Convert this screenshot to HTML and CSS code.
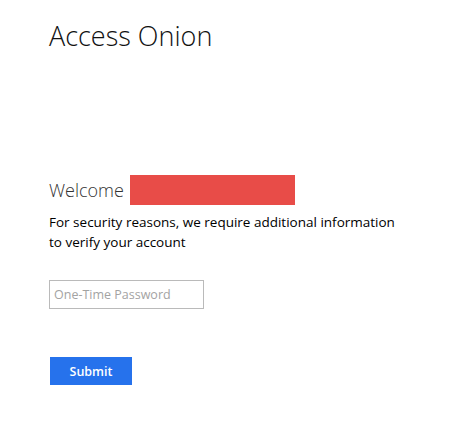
FILE: index.html
```html
<!DOCTYPE html>
<html>
<head>
<meta charset="utf-8">
<title>Access Onion</title>
<link rel="stylesheet" href="styles.css">
</head>
<body>
<main class="page">
  <h1 class="title">Access Onion</h1>
  <section class="welcome">
    <div class="welcome-row">
      <span class="welcome-text">Welcome</span>
      <span class="redacted"></span>
    </div>
    <p class="info">For security reasons, we require additional information to verify your account</p>
  </section>
  <form class="form">
    <input class="otp" type="text" placeholder="One-Time Password">
    <button class="submit" type="button">Submit</button>
  </form>
</main>
</body>
</html>
```
FILE: styles.css
```css
html, body {
  margin: 0;
  padding: 0;
  background: #fff;
}
body {
  font-family: "Open Sans", "Noto Sans", sans-serif;
  color: #000;
}
.page {
  padding: 18px 0 0 49px;
  width: 360px;
}
.title {
  margin: 0;
  font-size: 27px;
  font-weight: 300;
  line-height: 36px;
  color: #111;
}
.welcome {
  margin-top: 121px;
}
.welcome-row {
  display: flex;
  align-items: center;
  gap: 6px;
  height: 30px;
}
.welcome-text {
  font-size: 18px;
  font-weight: 300;
  color: #333;
}
.redacted {
  display: block;
  width: 165px;
  height: 30px;
  background: #e84c48;
}
.info {
  margin: 7px 0 0;
  font-size: 13.5px;
  line-height: 20px;
  color: #000;
}
.form {
  display: flex;
  flex-direction: column;
  align-items: flex-start;
  margin-top: 28px;
}
.otp {
  box-sizing: border-box;
  width: 155px;
  height: 29px;
  margin: 0;
  padding: 0 4px;
  border: 1px solid #bababa;
  font-family: inherit;
  font-size: 12.5px;
  color: #333;
  outline: none;
}
.otp::placeholder {
  color: #a3a3a3;
}
.submit {
  margin: 48px 0 0 1px;
  width: 82px;
  height: 28px;
  border: 0;
  background: #2672ec;
  color: #fff;
  font-family: inherit;
  font-size: 12.5px;
  font-weight: 600;
  padding: 0;
}
```
